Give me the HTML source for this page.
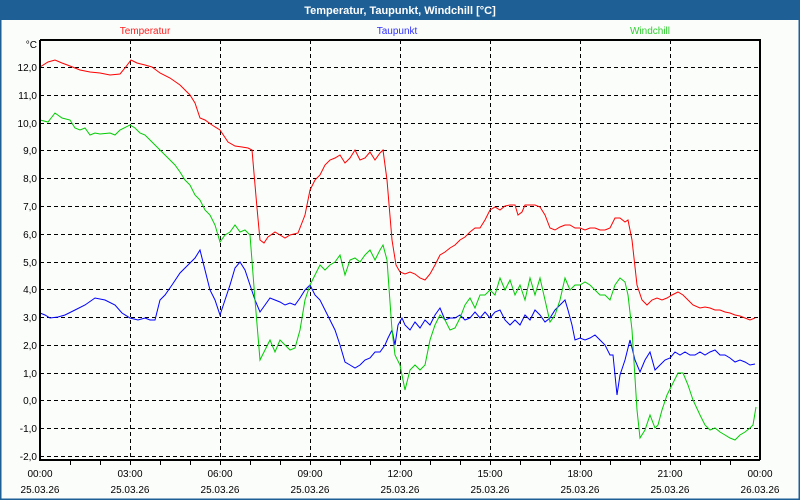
<!DOCTYPE html>
<html><head><meta charset="utf-8"><style>
html,body{margin:0;padding:0;}
body{width:800px;height:500px;overflow:hidden;background:#fbfdfb;font-family:"Liberation Sans",sans-serif;}
</style></head><body>
<svg width="800" height="500" xmlns="http://www.w3.org/2000/svg" style="display:block">
<rect x="0" y="0" width="800" height="500" fill="#fbfdfb"/>
<rect x="0.5" y="0.5" width="799" height="499" fill="none" stroke="#1e5f96" stroke-width="2"/>
<rect x="0" y="0" width="800" height="20" fill="#1e5f96"/>
<text x="400" y="14" text-anchor="middle" fill="#fff" font-size="11" font-weight="bold" font-family="Liberation Sans, sans-serif">Temperatur, Taupunkt, Windchill [°C]</text>
<g font-size="10" font-family="Liberation Sans, sans-serif">
<text x="145" y="34" text-anchor="middle" fill="#ff2020">Temperatur</text>
<text x="397" y="34" text-anchor="middle" fill="#3030ff">Taupunkt</text>
<text x="650" y="34" text-anchor="middle" fill="#30d030">Windchill</text>
</g>
<g stroke="#000" stroke-width="1" stroke-dasharray="4,3" fill="none">
<path d="M40 67.5H760M40 95.5H760M40 123.5H760M40 150.5H760M40 178.5H760M40 206.5H760M40 234.5H760M40 262.5H760M40 289.5H760M40 317.5H760M40 345.5H760M40 373.5H760M40 400.5H760M40 428.5H760M40 456.5H760"/>
<path d="M130.5 40V460M220.5 40V460M310.5 40V460M400.5 40V460M490.5 40V460M580.5 40V460M670.5 40V460"/>
</g>
<g font-size="10" fill="#000" text-anchor="end" font-family="Liberation Sans, sans-serif">
<text x="37" y="48">°C</text>
<text x="37" y="71">12,0</text><text x="37" y="99">11,0</text><text x="37" y="127">10,0</text>
<text x="37" y="154">9,0</text><text x="37" y="182">8,0</text><text x="37" y="210">7,0</text>
<text x="37" y="238">6,0</text><text x="37" y="266">5,0</text><text x="37" y="293">4,0</text>
<text x="37" y="321">3,0</text><text x="37" y="349">2,0</text><text x="37" y="377">1,0</text>
<text x="37" y="404">0,0</text><text x="37" y="432">-1,0</text><text x="37" y="460">-2,0</text>
</g>
<polyline fill="none" stroke="#ff0000" stroke-width="1" points="40,67 48,62 55,60 62,63 70,66 80,70 90,72 100,73 110,75 120,74 125,68 131,60 137,63 145,65 152,67 160,73 170,78 180,85 190,95 195,103 200,118 205,120 212,125 220,130 228,142 235,146 242,147 248,148 252,150 257,208 260,240 264,243 268,237 275,232 280,235 285,238 290,235 298,233 305,215 310,190 315,180 320,175 325,165 330,160 335,158 340,155 345,163 350,158 355,150 360,160 365,158 370,152 375,160 380,153 383,150 387,180 392,240 396,265 400,272 405,274 410,272 415,274 420,278 425,280 430,274 435,265 440,255 445,252 450,248 455,245 460,240 465,237 470,232 475,228 480,228 485,220 490,210 495,207 500,210 505,206 510,205 515,205 518,215 522,212 525,205 530,205 535,205 540,207 545,215 550,228 555,230 560,227 565,225 570,225 575,228 580,228 585,230 590,228 595,228 600,230 605,230 610,228 615,218 620,218 625,222 628,220 632,240 637,285 642,300 647,305 652,300 657,298 662,300 667,298 672,295 678,292 683,295 688,300 693,305 700,308 705,307 710,308 715,310 720,310 725,312 730,313 735,315 740,316 745,318 750,320 755,318"/>
<polyline fill="none" stroke="#0000ff" stroke-width="1" points="40,313 45,315 50,318 58,317 65,315 75,310 85,305 95,298 105,300 115,305 122,313 130,318 138,320 145,318 150,320 155,320 160,300 165,295 172,285 180,273 188,265 195,258 200,250 205,270 210,290 215,300 220,315 225,300 230,285 235,268 240,262 245,270 250,285 255,300 260,312 265,305 270,298 275,300 280,302 285,305 290,303 295,305 300,298 305,290 310,285 315,295 320,300 325,310 330,320 335,330 340,345 345,362 350,365 355,368 360,365 365,360 370,358 375,352 380,352 385,345 388,338 392,330 395,345 398,325 402,318 405,325 410,330 415,322 420,328 425,320 430,325 435,315 440,308 445,320 450,318 455,318 460,315 465,320 470,318 475,312 480,318 485,312 490,318 495,312 500,310 505,320 510,325 515,320 520,325 525,315 530,320 535,310 540,315 545,322 550,318 555,310 560,305 565,300 568,310 572,325 575,340 580,338 585,340 590,338 595,335 600,340 605,345 610,355 613,355 617,395 620,375 625,360 630,340 635,360 640,372 645,360 650,352 655,370 660,365 665,360 670,358 675,352 680,355 685,352 690,355 695,355 700,352 705,355 710,352 715,350 720,355 725,355 730,358 735,362 740,360 745,362 750,365 755,364"/>
<polyline fill="none" stroke="#00cc00" stroke-width="1" points="40,120 48,122 55,113 62,118 70,120 75,128 80,130 85,128 90,135 95,133 100,134 110,133 115,135 120,130 130,125 135,128 140,133 145,135 150,140 155,145 160,150 165,155 170,160 175,165 180,172 185,180 190,185 195,195 200,200 205,210 210,215 215,225 220,242 225,235 230,232 235,225 240,232 245,230 250,235 255,300 260,360 265,350 270,340 275,352 280,340 285,345 290,350 295,348 300,330 305,300 310,285 315,275 320,265 325,270 330,265 335,262 340,255 345,275 350,260 355,258 360,262 365,255 370,250 375,260 380,250 383,245 387,260 392,330 395,355 400,365 405,390 410,370 415,365 420,370 425,365 430,340 435,325 440,315 445,320 450,330 455,328 460,318 465,305 470,298 475,308 480,295 485,295 490,290 495,295 500,278 505,290 510,280 515,295 520,285 525,300 530,278 535,295 540,278 545,300 550,322 555,315 560,300 565,278 570,290 575,285 580,285 585,282 590,285 595,290 600,295 605,295 610,300 615,285 620,278 625,282 628,295 632,330 637,410 640,438 645,430 650,415 655,428 658,425 662,410 667,395 672,385 678,373 683,373 688,385 693,400 700,415 705,425 710,430 715,428 720,432 725,435 730,438 735,440 740,435 745,432 750,428 753,425 756,407"/>
<path d="M40 40H760V460M40 40V460H760" fill="none" stroke="#000" stroke-width="2"/>
<g stroke="#000" stroke-width="1">
<path d="M70.5 460V465M100.5 460V465M130.5 460V465M160.5 460V465M190.5 460V465M220.5 460V465M250.5 460V465M280.5 460V465M310.5 460V465M340.5 460V465M370.5 460V465M400.5 460V465M430.5 460V465M460.5 460V465M490.5 460V465M520.5 460V465M550.5 460V465M580.5 460V465M610.5 460V465M640.5 460V465M670.5 460V465M700.5 460V465M730.5 460V465"/>
</g>
<g font-size="10" fill="#000" text-anchor="middle" font-family="Liberation Sans, sans-serif">
<text x="40" y="477">00:00</text><text x="40" y="493">25.03.26</text>
<text x="130" y="477">03:00</text><text x="130" y="493">25.03.26</text>
<text x="220" y="477">06:00</text><text x="220" y="493">25.03.26</text>
<text x="310" y="477">09:00</text><text x="310" y="493">25.03.26</text>
<text x="400" y="477">12:00</text><text x="400" y="493">25.03.26</text>
<text x="490" y="477">15:00</text><text x="490" y="493">25.03.26</text>
<text x="580" y="477">18:00</text><text x="580" y="493">25.03.26</text>
<text x="670" y="477">21:00</text><text x="670" y="493">25.03.26</text>
<text x="760" y="477">00:00</text><text x="760" y="493">26.03.26</text>
</g>
</svg>
</body></html>
